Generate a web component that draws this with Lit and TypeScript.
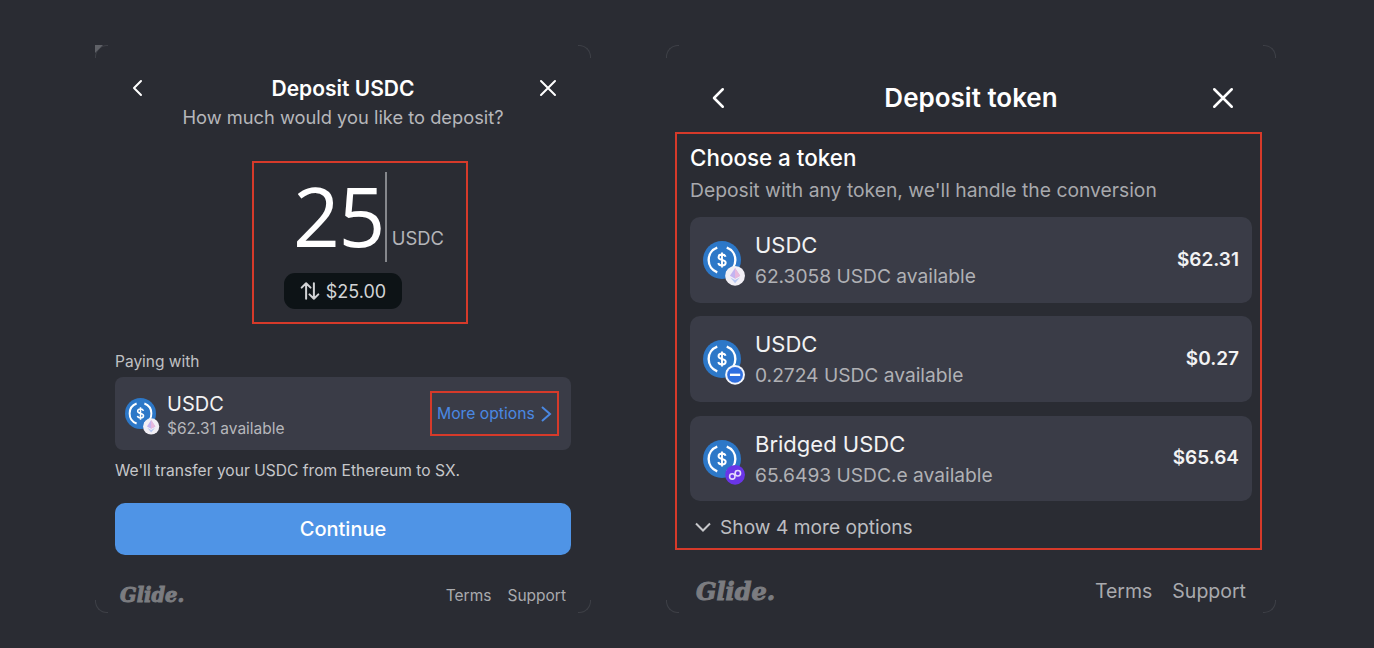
import { LitElement, html, css, svg } from "lit";
import { customElement } from "lit/decorators.js";

type Badge = "eth" | "base" | "polygon";

const badges = {
  eth: svg`
    <circle cx="40.500" cy="44" r="12.500" fill="#f1eff5" />
    <path d="M40.500 34l6.500 10-6.500 3.600-6.500-3.600z" fill="#c3b4f0" />
    <path d="M40.500 34v13.600l6.500-3.600z" fill="#e8b9dc" />
    <path d="M34.500 46l6 7.500 6-7.500-6 3.400z" fill="#b7c8f2" />`,
  base: svg`
    <circle cx="40.500" cy="44" r="12.500" fill="#f4f6fb" />
    <circle cx="40.500" cy="44" r="10" fill="#2f6fe0" />
    <path d="M34 44h13" stroke="#fff" stroke-width="3" />`,
  polygon: svg`
    <circle cx="40.500" cy="44" r="12.500" fill="#6a35e8" />
    <circle cx="37" cy="46" r="3.400" fill="none" stroke="#e4d9fb" stroke-width="2" />
    <circle cx="44" cy="42" r="3.400" fill="none" stroke="#e4d9fb" stroke-width="2" />`,
};

function tokenIcon(badge: Badge) {
  return html`<svg class="token" viewBox="0 0 48 48">
    <circle cx="24" cy="24" r="24" fill="#2d78c8" />
    <path d="M18 8.500a16.500 16.500 0 0 0 0 31M30 8.500a16.500 16.500 0 0 1 0 31" fill="none" stroke="#fff" stroke-width="3" />
    <path d="M28.500 20c-.5-2-2.200-2.900-4.500-2.900-2.500 0-4.400 1.200-4.400 3.300 0 4.600 9.100 2.500 9.100 7.100 0 2.200-2.100 3.400-4.700 3.400-2.400 0-4.200-1.100-4.700-3.200M24 14.500v19" fill="none" stroke="#fff" stroke-width="2.400" />
    ${badges[badge]}
  </svg>`;
}

const back = html`<svg class="hicon" viewBox="0 0 24 24"><path d="M15 5l-7 7 7 7" /></svg>`;
const close = html`<svg class="hicon" viewBox="0 0 24 24"><path d="M5 5l14 14M19 5L5 19" /></svg>`;
const corners = html`
  <i class="corner tl"></i><i class="corner tr"></i>
  <i class="corner bl"></i><i class="corner br"></i>
`;

const tokens: { name: string; sub: string; value: string; badge: Badge }[] = [
  { name: "USDC", sub: "62.3058 USDC available", value: "$62.31", badge: "eth" },
  { name: "USDC", sub: "0.2724 USDC available", value: "$0.27", badge: "base" },
  { name: "Bridged USDC", sub: "65.6493 USDC.e available", value: "$65.64", badge: "polygon" },
];

@customElement("app-root")
export class AppRoot extends LitElement {
  static styles = css`
    :host {
      display: block;
      height: 648px;
      overflow: hidden;
      background: #2a2c33;
      font-family: Inter, "Liberation Sans", sans-serif;
      color: #fff;
    }

    .page {
      display: flex;
      gap: 75px;
      padding: 45px 0 0 95px;
    }

    .panel {
      position: relative;
      box-sizing: border-box;
      height: 568px;
      display: flex;
      flex-direction: column;
    }

    .corner {
      position: absolute;
      width: 12px;
      height: 12px;
      border: 0 solid #3e4047;
    }
    .corner.tl { left: 0; top: 0; border-width: 1px 0 0 1px; border-top-left-radius: 12px; }
    .corner.tr { right: 0; top: 0; border-width: 1px 1px 0 0; border-top-right-radius: 12px; }
    .corner.bl { left: 0; bottom: 0; border-width: 0 0 1px 1px; border-bottom-left-radius: 12px; }
    .corner.br { right: 0; bottom: 0; border-width: 0 1px 1px 0; border-bottom-right-radius: 12px; }
    .flag {
      position: absolute;
      left: 0;
      top: 0;
      width: 8px;
      height: 8px;
      background: #5f6167;
      clip-path: polygon(0 0, 100% 0, 0 100%);
    }

    .hicon {
      fill: none;
      stroke: #fff;
      stroke-width: 2;
      stroke-linecap: round;
      stroke-linejoin: round;
      display: block;
    }

    .head {
      display: grid;
      grid-template-columns: 1fr auto 1fr;
      align-items: center;
    }
    .head .hicon:last-child { justify-self: end; }

    .title { font-weight: 600; }

    /* left panel */
    .left {
      width: 496px;
      padding: 0 20px;
    }
    .left .head {
      height: 30px;
      margin-top: 28px;
      padding: 0 11px 0 11px;
    }
    .left .hicon { width: 24px; height: 24px; }
    .left .title { font-size: 21px; }
    .ask {
      margin-top: 1px;
      height: 26px;
      line-height: 26px;
      text-align: center;
      font-size: 18.300px;
      color: #b6b7bb;
    }

    .amount {
      box-sizing: border-box;
      width: 216px;
      height: 163px;
      margin: 31px 0 0 137px;
      border: 2px solid #d63a2a;
      padding: 9px 0 0 30px;
    }
    .amount-row {
      display: flex;
      align-items: flex-end;
      height: 90px;
      padding-left: 9px;
    }
    .digits {
      font-family: "Open Sans", sans-serif;
      font-size: 82px;
      font-weight: 500;
      letter-spacing: -1.500px;
      line-height: 90px;
      height: 90px;
      margin-bottom: 2px;
    }
    .caret {
      width: 2px;
      height: 90px;
      background: #85878c;
      margin: 0 5px 0 1px;
    }
    .unit {
      font-size: 18.400px;
      line-height: 26px;
      margin-bottom: 11px;
      color: #b4b5b9;
    }
    .fiat {
      display: flex;
      align-items: center;
      justify-content: center;
      gap: 6px;
      width: 118px;
      height: 36px;
      margin-top: 11px;
      border-radius: 11px;
      background: #0d1316;
      font-size: 18px;
      color: #d2d3d5;
    }
    .fiat svg {
      width: 20px;
      height: 20px;
      fill: none;
      stroke: #d2d3d5;
      stroke-width: 1.800;
      stroke-linecap: round;
      stroke-linejoin: round;
    }

    .paying {
      margin-top: 28px;
      height: 20px;
      line-height: 20px;
      font-size: 15.500px;
      color: #c0c1c4;
    }
    .pay-card {
      display: flex;
      align-items: center;
      box-sizing: border-box;
      height: 73px;
      margin-top: 5px;
      padding: 0 12px 0 10px;
      background: #3a3c47;
      border-radius: 8px;
    }
    .pay-card .token { width: 31px; height: 31px; flex: none; margin: 0 11px 0 0; overflow: visible; }
    .pay-info { flex: 1; padding-top: 4px; }
    .pay-name { font-size: 20px; line-height: 26px; color: #f2f2f3; }
    .pay-sub { font-size: 15.500px; line-height: 22px; margin-top: 1px; color: #b6b7bb; }
    .more {
      box-sizing: border-box;
      display: flex;
      align-items: center;
      justify-content: space-between;
      width: 129px;
      height: 45px;
      padding: 0 3px 0 5px;
      border: 2px solid #d63a2a;
      font-size: 15.700px;
      color: #4a88e2;
    }
    .more svg {
      width: 16px;
      height: 18px;
      fill: none;
      stroke: #4a88e2;
      stroke-width: 2;
    }
    .note {
      margin-top: 10px;
      height: 22px;
      line-height: 22px;
      font-size: 15.600px;
      color: #c6c7ca;
    }
    .continue {
      display: flex;
      align-items: center;
      justify-content: center;
      height: 52px;
      margin-top: 21px;
      border-radius: 10px;
      background: #4f94e6;
      font-size: 20px;
      font-weight: 500;
    }

    .foot {
      display: flex;
      align-items: center;
      justify-content: space-between;
    }
    .logo {
      font-family: "DejaVu Serif", serif;
      font-style: italic;
      font-weight: 700;
      color: #7b7c80;
      -webkit-text-stroke: 1px #7b7c80;
    }
    .links { display: flex; color: #a9aaae; }
    .left .foot {
      height: 24px;
      margin-top: 28px;
      padding: 0 5px;
    }
    .left .logo { font-size: 19.500px; }
    .left .links { gap: 16px; font-size: 15.500px; }

    /* right panel */
    .right {
      width: 610px;
      padding: 0 14px 0 9px;
    }
    .right .head {
      height: 36px;
      margin: 35px -5px 0 0;
      padding: 0 29px;
    }
    .right .hicon { width: 30px; height: 30px; }
    .right .title { font-size: 26px; margin-top: -2px; }
    .chooser {
      box-sizing: border-box;
      height: 418px;
      margin-top: 16px;
      border: 2px solid #d63a2a;
      padding: 11px 8px 0 13px;
    }
    .choose-title {
      height: 26px;
      line-height: 26px;
      font-size: 22.400px;
      font-weight: 500;
    }
    .choose-sub {
      height: 26px;
      line-height: 26px;
      margin-top: 6px;
      font-size: 19.300px;
      color: #a8a9ad;
    }
    .rows {
      display: flex;
      flex-direction: column;
      gap: 13px;
      margin-top: 14px;
    }
    .row {
      display: flex;
      align-items: center;
      box-sizing: border-box;
      height: 86px;
      padding: 0 13px;
      background: #3a3c47;
      border-radius: 10px;
    }
    .row:nth-child(3) { margin-top: 1px; height: 85px; }
    .row .token { width: 38px; height: 38px; flex: none; margin: 0 14px 0 0; overflow: visible; }
    .row-info { flex: 1; }
    .row-name { font-size: 22px; line-height: 30px; color: #f2f2f3; }
    .row-sub { font-size: 19.200px; line-height: 28px; margin-top: 2px; color: #b0b1b5; }
    .row-value { font-size: 19px; font-weight: 600; color: #f2f2f3; margin-top: -2px; }
    .show {
      display: flex;
      align-items: center;
      gap: 7px;
      height: 26px;
      margin-top: 13px;
      padding-left: 3px;
      font-size: 19.200px;
      color: #bdbec1;
    }
    .show svg {
      width: 20px;
      height: 20px;
      fill: none;
      stroke: #c6c7ca;
      stroke-width: 2;
    }
    .right .foot {
      height: 28px;
      margin: 27px -5px 0 0;
      padding: 0 21px;
    }
    .right .logo { font-size: 24px; }
    .right .links { gap: 20px; font-size: 19.500px; }
  `;

  render() {
    return html`
      <div class="page">
        <section class="panel left">
          ${corners}<i class="flag"></i>
          <div class="head">${back}<span class="title">Deposit USDC</span>${close}</div>
          <div class="ask">How much would you like to deposit?</div>
          <div class="amount">
            <div class="amount-row">
              <span class="digits">25</span><i class="caret"></i><span class="unit">USDC</span>
            </div>
            <div class="fiat">
              <svg viewBox="0 0 18 18"><path d="M5.500 16V2M1.500 6l4-4 4 4M12.500 2v14M8.500 12l4 4 4-4" /></svg>
              $25.00
            </div>
          </div>
          <div class="paying">Paying with</div>
          <div class="pay-card">
            ${tokenIcon("eth")}
            <div class="pay-info">
              <div class="pay-name">USDC</div>
              <div class="pay-sub">$62.31 available</div>
            </div>
            <div class="more">
              More options
              <svg viewBox="0 0 16 18"><path d="M4 2l8 7-8 7" /></svg>
            </div>
          </div>
          <div class="note">We'll transfer your USDC from Ethereum to SX.</div>
          <div class="continue">Continue</div>
          <div class="foot">
            <span class="logo">Glide.</span>
            <span class="links"><span>Terms</span><span>Support</span></span>
          </div>
        </section>

        <section class="panel right">
          ${corners}
          <div class="head">${back}<span class="title">Deposit token</span>${close}</div>
          <div class="chooser">
            <div class="choose-title">Choose a token</div>
            <div class="choose-sub">Deposit with any token, we'll handle the conversion</div>
            <div class="rows">
              ${tokens.map(
                (t) => html`
                  <div class="row">
                    ${tokenIcon(t.badge)}
                    <div class="row-info">
                      <div class="row-name">${t.name}</div>
                      <div class="row-sub">${t.sub}</div>
                    </div>
                    <span class="row-value">${t.value}</span>
                  </div>
                `
              )}
            </div>
            <div class="show">
              <svg viewBox="0 0 20 20"><path d="M3 6.500l7 7 7-7" /></svg>
              Show 4 more options
            </div>
          </div>
          <div class="foot">
            <span class="logo">Glide.</span>
            <span class="links"><span>Terms</span><span>Support</span></span>
          </div>
        </section>
      </div>
    `;
  }
}
